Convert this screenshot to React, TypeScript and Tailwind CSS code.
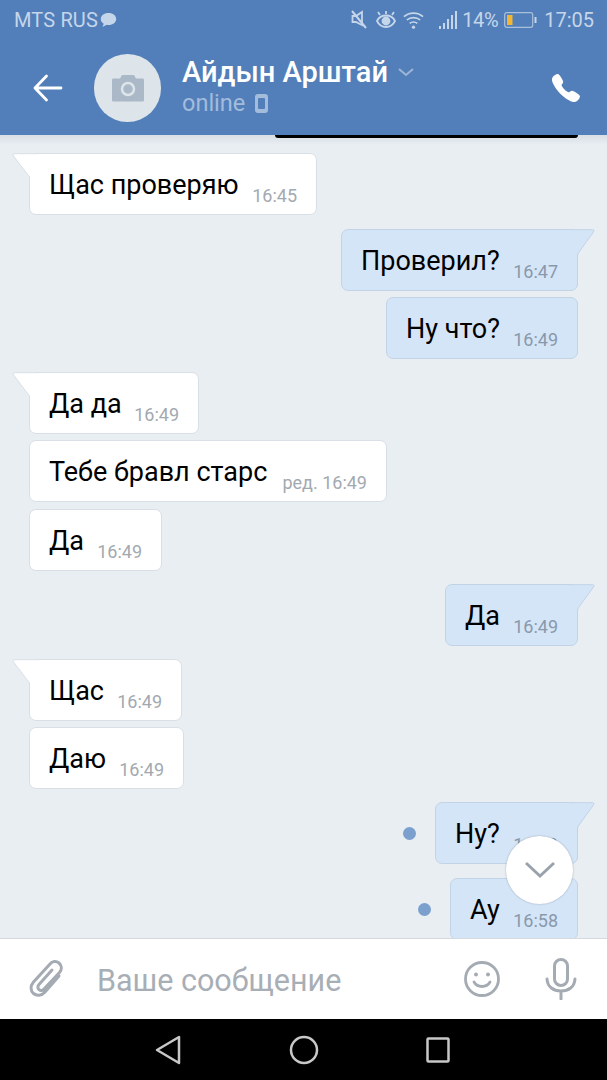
import React from "react";
import { IoCall } from "react-icons/io5";

type Msg = { text: string; time: string; out?: boolean; tail?: boolean; mt: string; w: string; dot?: boolean };

const msgs: Msg[] = [
  { text: "Щас проверяю", time: "16:45", tail: true, mt: "mt-[15px]", w: "w-[288px]" },
  { text: "Проверил?", time: "16:47", out: true, tail: true, mt: "mt-[14px]", w: "w-[237px]" },
  { text: "Ну что?", time: "16:49", out: true, mt: "mt-[6px]", w: "w-[192px]" },
  { text: "Да да", time: "16:49", tail: true, mt: "mt-[13px]", w: "w-[170px]" },
  { text: "Тебе бравл старс", time: "ред. 16:49", mt: "mt-[6px]", w: "w-[358px]" },
  { text: "Да", time: "16:49", mt: "mt-[7px]", w: "w-[133px]" },
  { text: "Да", time: "16:49", out: true, tail: true, mt: "mt-[13px]", w: "w-[133px]" },
  { text: "Щас", time: "16:49", tail: true, mt: "mt-[13px]", w: "w-[153px]" },
  { text: "Даю", time: "16:49", mt: "mt-[6px]", w: "w-[155px]" },
  { text: "Ну?", time: "16:49", out: true, tail: true, mt: "mt-[13px]", w: "w-[143px]", dot: true },
  { text: "Ау", time: "16:58", out: true, mt: "mt-[14px]", w: "w-[128px]", dot: true },
];

function Bubble({ m }: { m: Msg }) {
  return (
    <div className={`${m.mt} flex shrink-0 items-center ${m.out ? "justify-end" : "justify-start"} px-[29px]`}>
      {m.dot && <span className="mr-[19px] h-[13px] w-[13px] rounded-full bg-[#7ba0cd]" />}
      <div
        className={`relative flex h-[62px] ${m.w} justify-between rounded-[7px] border pl-[19px] pr-[19px] ${
          m.out ? "border-[#c3d3e6] bg-[#d5e5f8]" : "border-[#d9dfe6] bg-white"
        }`}
      >
        {m.tail && !m.out && (
          <svg className="absolute -left-[18px] -top-[1px]" width="26" height="28" viewBox="0 0 26 28">
            <path d="M17.500 24 L1.500 3 Q0 .7 3 .7 L26 .7 L26 28 L17.500 28 Z" fill="#fff" />
            <path d="M17.500 28 L17.500 24 L1.500 3 Q0 .7 3 .7 L26 .7" fill="none" stroke="#d9dfe6" />
          </svg>
        )}
        {m.tail && m.out && (
          <svg className="absolute -right-[18px] -top-[1px]" width="26" height="34" viewBox="0 0 26 34">
            <path d="M8.500 34 L8.500 27 Q8.500 25 10 23 L24.500 3 Q26 .7 23.500 .7 L0 .7 L0 34 Z" fill="#d5e5f8" />
            <path d="M8.500 34 L8.500 27 Q8.500 25 10 23 L24.500 3 Q26 .7 23.500 .7 L0 .7" fill="none" stroke="#c3d3e6" />
          </svg>
        )}
        <span className="relative mt-[15px] text-[27px] leading-[32px] text-black">{m.text}</span>
        <span className={`relative mt-[31px] text-[18px] leading-[22px] ${m.out ? "text-[#8899ab]" : "text-[#a3a9b0]"}`}>{m.time}</span>
      </div>
    </div>
  );
}

function StatusBar() {
  return (
    <div className="flex h-[40px] shrink-0 items-center pl-[14px] pr-[13px] text-[20px] text-[#c6d6ea]">
      <span className="tracking-[0.15px]">MTS RUS</span>
      <svg className="ml-[2px]" width="17" height="16" viewBox="0 0 17 16">
        <path d="M8.500 1C4 1 .8 3.600.8 7c0 2 1.100 3.600 2.900 4.700L2.500 15l4.200-2.200c.6.1 1.200.2 1.800.2 4.500 0 7.700-2.600 7.700-6S13 1 8.500 1z" fill="#c6d6ea" />
      </svg>
      <div className="flex-1" />
      <svg width="16" height="22" viewBox="0 0 16 22" fill="none" stroke="#c6d6ea" strokeWidth="1.800">
        <path d="M1.500 7h3.500l6-4v13l-6-3H1.500z" />
        <path d="M1 2l14 17" strokeWidth="2" />
      </svg>
      <svg className="ml-[8px]" width="22" height="22" viewBox="0 0 22 22" fill="none" stroke="#c6d6ea" strokeWidth="1.800">
        <path d="M2 12c2-4 5.500-5.500 9-5.500s7 1.500 9 5.500c-2 4-5.500 6-9 6s-7-2-9-6z" />
        <circle cx="11" cy="12" r="3.500" fill="#c6d6ea" />
        <path d="M5 6L3 3M11 5V2M17 6l2-3" />
      </svg>
      <svg className="ml-[6px]" width="21" height="20" viewBox="0 0 22 20" fill="none" stroke="#c6d6ea" strokeWidth="1.700">
        <path d="M1 6.500c5.500-5 14.500-5 20 0M4 10c3.800-3.400 10.200-3.400 14 0M7 13.500c2.200-1.900 5.800-1.900 8 0" />
        <circle cx="11" cy="17.500" r="1.700" fill="#c6d6ea" stroke="none" />
      </svg>
      <svg className="ml-[15px]" width="19" height="20" viewBox="0 0 19 20" fill="#c6d6ea">
        <rect x="0" y="16" width="2" height="3" />
        <rect x="4" y="13" width="2" height="6" />
        <rect x="8" y="9" width="2" height="10" />
        <rect x="12" y="5" width="2" height="14" />
        <rect x="16" y="1" width="2" height="18" />
      </svg>
      <span className="ml-[4px] tracking-[-0.4px]">14%</span>
      <svg className="ml-[6px]" width="33" height="18" viewBox="0 0 33 18">
        <rect x=".7" y="1.700" width="28" height="14.600" rx="2" fill="none" stroke="#a9c0dc" strokeWidth="1.200" />
        <rect x="3" y="4" width="5.500" height="10" fill="#f2b632" />
        <rect x="30.500" y="6" width="2" height="6" fill="#c6d6ea" />
      </svg>
      <span className="ml-[7px]">17:05</span>
    </div>
  );
}

function Header() {
  return (
    <div className="relative z-10 flex h-[95px] shrink-0 items-center pr-[25px]">
      <svg className="ml-[33px]" width="30" height="28" viewBox="0 0 30 28" fill="none" stroke="#fff" strokeWidth="2.800" strokeLinecap="round" strokeLinejoin="round">
        <path d="M28 14H2M13.500 2L2 14l11.500 12" />
      </svg>
      <div className="ml-[31px] flex h-[68px] w-[67px] shrink-0 items-center justify-center rounded-full bg-[#dde4ea]">
        <svg width="34" height="28" viewBox="0 0 34 28">
          <path d="M1 6c0-1 .7-1.500 1.500-1.500H9L11 1h12l2 3.500h6.500c.8 0 1.500.5 1.500 1.500v20c0 1-.7 1.500-1.500 1.500h-29C1.700 27.500 1 27 1 26z" fill="#aab8c7" />
          <circle cx="17" cy="15" r="6" fill="none" stroke="#dde4ea" strokeWidth="2.500" />
        </svg>
      </div>
      <div className="ml-[21px] flex flex-1 flex-col pb-[3px]">
        <div className="flex h-[34px] items-center">
          <span className="text-[29px] font-medium leading-[34px] text-white">Айдын Арштай</span>
          <svg className="ml-[10px]" width="16" height="9" viewBox="0 0 16 9" fill="none" stroke="#9db6d6" strokeWidth="2">
            <path d="M1 1l7 6 7-6" />
          </svg>
        </div>
        <div className="flex h-[28px] items-center">
          <span className="text-[23.500px] leading-[28px] text-[#a3bcdc]">online</span>
          <svg className="ml-[10px]" width="13" height="19" viewBox="0 0 13 19">
            <rect width="13" height="19" rx="3" fill="#a3bcdc" />
            <rect x="3" y="4" width="7" height="11" rx="1" fill="#527fb9" />
          </svg>
        </div>
      </div>
      <IoCall className="text-white" size={32} />
    </div>
  );
}

export default function App() {
  return (
    <div className="flex h-[1080px] w-[607px] flex-col overflow-hidden bg-[#e9eef3] font-['Roboto',sans-serif]">
      <div className="shrink-0 bg-[#527fb9]">
        <StatusBar />
        <Header />
      </div>
      <div className="relative flex flex-1 flex-col overflow-hidden">
        <div className="pointer-events-none absolute inset-x-0 top-0 h-[10px] bg-gradient-to-b from-[#d8dee4] to-transparent" />
        <div className="relative ml-[275px] mr-[29px] h-[3px] shrink-0 rounded-b-[4px] bg-black" />
        {msgs.map((m, i) => (
          <Bubble key={i} m={m} />
        ))}
        <div className="absolute left-[506px] top-[701px] flex h-[68px] w-[67px] items-center justify-center rounded-full bg-white shadow-[0_0_2px_rgba(0,0,0,0.3)]">
          <svg width="30" height="18" viewBox="0 0 30 18" fill="none" stroke="#9aa3ad" strokeWidth="3">
            <path d="M1 2l14 13L29 2" />
          </svg>
        </div>
      </div>
      <div className="flex h-[81px] shrink-0 items-center border-t border-[#d5d9de] bg-white pr-[30px]">
        <svg className="ml-[29px]" width="36" height="40" viewBox="0 0 36 40" fill="none" stroke="#a4abb3" strokeWidth="3" strokeLinecap="round">
          <path d="M30 17L16 33c-3.500 4-8.500 4-11.500 1.500S1 27 4.500 23L21 5c2.500-3 6-3.500 9-1s3 6.500.500 9.500L15 30c-1.500 1.800-3.500 2-5 .7s-1.500-3.500 0-5.200L23 11" />
        </svg>
        <span className="ml-[32px] flex-1 pt-[3px] text-[30.500px] text-[#a8aeb5]">Ваше сообщение</span>
        <svg width="38" height="38" viewBox="0 0 38 38" fill="none" stroke="#a4abb3" strokeWidth="2.800" strokeLinecap="round">
          <circle cx="19" cy="19" r="16.500" />
          <path d="M11 22c3.500 6 12.500 6 16 0" />
          <circle cx="13" cy="14.500" r="2" fill="#a4abb3" stroke="none" />
          <circle cx="25" cy="14.500" r="2" fill="#a4abb3" stroke="none" />
        </svg>
        <svg className="ml-[44px]" width="32" height="42" viewBox="0 0 32 42" fill="none" stroke="#a4abb3" strokeWidth="3" strokeLinecap="round">
          <rect x="9.500" y="1.500" width="13" height="26" rx="6.500" />
          <path d="M2 21c.5 8 6.500 12 14 12s13.500-4 14-12M16 33v8" />
        </svg>
      </div>
      <div className="flex h-[61px] shrink-0 items-center bg-black">
        <svg className="ml-[155px]" width="26" height="30" viewBox="0 0 26 30" fill="none" stroke="#c8c8c8" strokeWidth="2.500" strokeLinejoin="round">
          <path d="M24 2v26L2 15z" />
        </svg>
        <svg className="ml-[108px]" width="30" height="30" viewBox="0 0 30 30" fill="none" stroke="#c8c8c8" strokeWidth="2.500">
          <circle cx="15" cy="15" r="13" />
        </svg>
        <svg className="ml-[107px]" width="24" height="26" viewBox="0 0 24 26" fill="none" stroke="#c8c8c8" strokeWidth="2.500" strokeLinejoin="round">
          <rect x="1.500" y="1.500" width="21" height="23" rx="1" />
        </svg>
      </div>
    </div>
  );
}
